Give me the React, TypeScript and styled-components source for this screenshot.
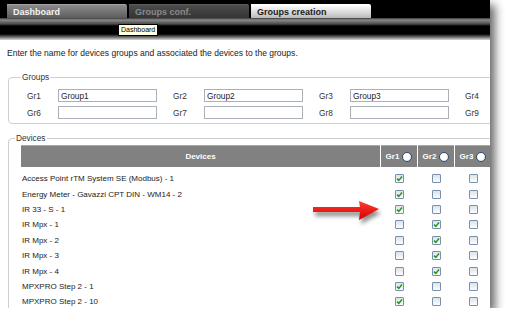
import styled, { createGlobalStyle } from "styled-components";

const GlobalStyle = createGlobalStyle`
  html, body {
    margin: 0;
    padding: 0;
    background: #fff;
  }
  body {
    font-family: "Liberation Sans", Arial, sans-serif;
    color: #333;
  }
`;

const Frame = styled.div`
  width: 490px;
  height: 308px;
  overflow: hidden;
  position: relative;
  background: #fff;
  box-shadow: 5px 5px 9px rgba(0, 0, 0, 0.6);
  display: flex;
  flex-direction: column;
`;

const TabBar = styled.div`
  height: 18px;
  background: #000;
  display: flex;
  align-items: flex-end;
  gap: 2px;
  padding-left: 7px;
  flex-shrink: 0;
`;

type TabKind = "normal" | "dim" | "active";

const Tab = styled.div<{ kind: TabKind }>`
  width: 120px;
  height: 14px;
  box-sizing: border-box;
  padding-left: 6px;
  display: flex;
  align-items: center;
  font-size: 9px;
  font-weight: bold;
  border-top-right-radius: 2px;
  background: ${(p) =>
    p.kind === "active"
      ? "linear-gradient(#ffffff, #d0d0d0 70%, #b8b8b8)"
      : p.kind === "dim"
      ? "linear-gradient(#4c4c4c, #343434)"
      : "linear-gradient(#8c8c8c, #5c5c5c)"};
  color: ${(p) =>
    p.kind === "active" ? "#1a1a1a" : p.kind === "dim" ? "#8a8a8a" : "#f2f2f6"};
  border-top: 1px solid
    ${(p) => (p.kind === "active" ? "#fff" : p.kind === "dim" ? "#5a5a5a" : "#a0a0a0")};
`;

const SubBar = styled.div`
  height: 22px;
  flex-shrink: 0;
  position: relative;
  background: linear-gradient(
    #3a3a3a 0,
    #8a8a8a 2px,
    #4a4a4a 6px,
    #000 8px,
    #000 16px,
    #6a6a6a 19px,
    #d8d8d8 22px
  );
`;

const Tooltip = styled.div`
  position: absolute;
  left: 118px;
  top: 6px;
  padding: 0 2px;
  height: 10px;
  line-height: 10px;
  font-size: 7px;
  color: #000;
  background: #ffffe1;
  border: 1px solid #000;
`;

const Intro = styled.p`
  margin: 8px 0 0 7px;
  font-size: 8.55px;
  line-height: 10px;
  color: #222;
  white-space: nowrap;
`;

const Fieldset = styled.fieldset`
  margin: 0 0 0 8px;
  width: 700px;
  box-sizing: border-box;
  border: 1px solid #cfcfcf;
  border-radius: 4px;
  min-width: 0;
`;

const Legend = styled.legend`
  font-size: 8.3px;
  line-height: 10px;
  color: #333;
  padding: 0 1px;
  margin-left: -6px;
`;

const GroupsSet = styled(Fieldset)`
  margin-top: 14px;
  padding: 7px 0 4px 18px;
`;

const DevicesSet = styled(Fieldset)`
  margin-top: 9px;
  padding: 2px 0 0 12px;
  flex: 1;
`;

const GroupGrid = styled.div`
  display: grid;
  grid-template-columns: repeat(4, 146px);
  row-gap: 4px;
`;

const GroupCell = styled.div`
  display: flex;
  align-items: center;
  height: 13px;
`;

const GroupLabel = styled.span`
  width: 31px;
  flex-shrink: 0;
  font-size: 8.3px;
  color: #333;
`;

const GroupInput = styled.input`
  width: 99px;
  height: 13px;
  box-sizing: border-box;
  border: 1px solid #a9b0b8;
  padding: 0 2px;
  font-family: "Liberation Sans", Arial, sans-serif;
  font-size: 8.3px;
  color: #222;
  outline: none;
`;

const Table = styled.div`
  display: flex;
  flex-direction: column;
`;

const Row = styled.div<{ head?: boolean }>`
  display: grid;
  grid-template-columns: 359px repeat(3, 36px);
  column-gap: 1px;
  height: ${(p) => (p.head ? "22px" : "15.4px")};
  margin-bottom: ${(p) => (p.head ? "4px" : "0")};
  align-items: center;
`;

const HeadCell = styled.div`
  height: 22px;
  box-sizing: border-box;
  background: #818181;
  border-top: 1px solid #a8a8a8;
  color: #fff;
  font-size: 8px;
  font-weight: bold;
  display: flex;
  align-items: center;
  justify-content: center;
  gap: 3px;
`;

const Radio = styled.span`
  width: 8px;
  height: 8px;
  border-radius: 50%;
  border: 1px solid #2f4f78;
  background: radial-gradient(circle at 40% 40%, #fff 45%, #c9d6e6);
`;

const DeviceName = styled.div`
  font-size: 8px;
  color: #222;
  padding-left: 1px;
  white-space: nowrap;
`;

const CheckCell = styled.div`
  display: flex;
  justify-content: center;
  align-items: center;
`;

const Box = styled.span`
  width: 9px;
  height: 9px;
  box-sizing: border-box;
  border: 1px solid #7890ab;
  border-radius: 1px;
  background: linear-gradient(#dde3ea, #fbfcfd);
  display: flex;
  align-items: center;
  justify-content: center;
`;

const Arrow = styled.svg`
  position: absolute;
  left: 312px;
  top: 199px;
  filter: drop-shadow(2px 4px 2px rgba(0, 0, 0, 0.45));
`;

const groupCells: [string, string | null][] = [
  ["Gr1", "Group1"],
  ["Gr2", "Group2"],
  ["Gr3", "Group3"],
  ["Gr4", null],
  ["Gr6", ""],
  ["Gr7", ""],
  ["Gr8", ""],
  ["Gr9", null],
];

const devices: [string, number][] = [
  ["Access Point rTM System SE (Modbus) - 1", 0],
  ["Energy Meter - Gavazzi CPT DIN - WM14 - 2", 0],
  ["IR 33 - S - 1", 0],
  ["IR Mpx - 1", 1],
  ["IR Mpx - 2", 1],
  ["IR Mpx - 3", 1],
  ["IR Mpx - 4", 1],
  ["MPXPRO Step 2 - 1", 0],
  ["MPXPRO Step 2 - 10", 0],
];

function CheckBox({ checked }: { checked: boolean }) {
  return (
    <Box>
      {checked && (
        <svg width="7" height="7" viewBox="0 0 7 7">
          <path d="M1 3.6 L2.8 5.4 L6 1.6" stroke="#1f9a1a" strokeWidth="1.5" fill="none" />
        </svg>
      )}
    </Box>
  );
}

export default function App() {
  return (
    <>
      <GlobalStyle />
      <Frame>
        <TabBar>
          <Tab kind="normal">Dashboard</Tab>
          <Tab kind="dim">Groups conf.</Tab>
          <Tab kind="active">Groups creation</Tab>
        </TabBar>
        <SubBar>
          <Tooltip>Dashboard</Tooltip>
        </SubBar>
        <Intro>Enter the name for devices groups and associated the devices to the groups.</Intro>

        <GroupsSet>
          <Legend>Groups</Legend>
          <GroupGrid>
            {groupCells.map(([label, value]) => (
              <GroupCell key={label}>
                <GroupLabel>{label}</GroupLabel>
                {value !== null && <GroupInput defaultValue={value} />}
              </GroupCell>
            ))}
          </GroupGrid>
        </GroupsSet>

        <DevicesSet>
          <Legend>Devices</Legend>
          <Table>
            <Row head>
              <HeadCell>Devices</HeadCell>
              {["Gr1", "Gr2", "Gr3"].map((g) => (
                <HeadCell key={g}>
                  {g}
                  <Radio />
                </HeadCell>
              ))}
            </Row>
            {devices.map(([name, group]) => (
              <Row key={name}>
                <DeviceName>{name}</DeviceName>
                {[0, 1, 2].map((i) => (
                  <CheckCell key={i}>
                    <CheckBox checked={i === group} />
                  </CheckCell>
                ))}
              </Row>
            ))}
          </Table>
        </DevicesSet>

        <Arrow width="70" height="24" viewBox="0 0 70 24">
          <defs>
            <linearGradient id="red" x1="0" y1="0" x2="0" y2="1">
              <stop offset="0" stopColor="#ff3b30" />
              <stop offset="1" stopColor="#d40000" />
            </linearGradient>
          </defs>
          <path d="M1 8 L48 8 L47 2 L67 10 L47 21 L48 13 L1 13 Z" fill="url(#red)" />
        </Arrow>
      </Frame>
    </>
  );
}
